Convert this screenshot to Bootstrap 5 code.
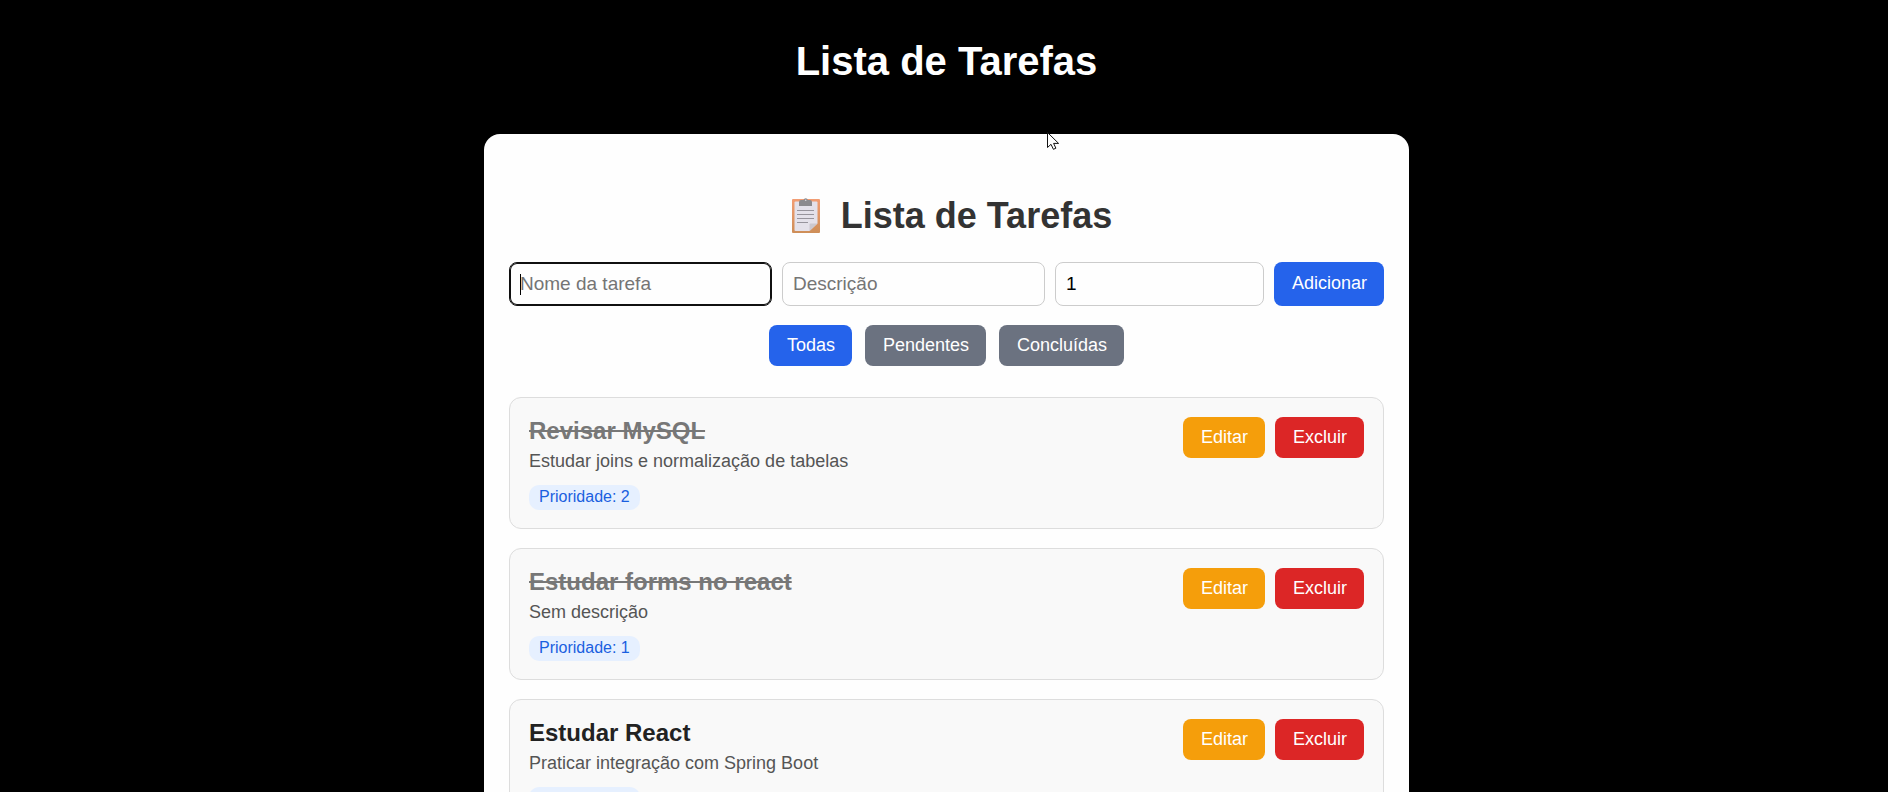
<!DOCTYPE html>
<html lang="pt-BR">
<head>
<meta charset="utf-8">
<meta name="viewport" content="width=device-width, initial-scale=1">
<title>Lista de Tarefas</title>
<link href="https://cdn.jsdelivr.net/npm/bootstrap@5.3.0/dist/css/bootstrap.min.css" rel="stylesheet">
<style>
  body { background: #000; font-family: "Liberation Sans", Arial, sans-serif; font-size: 18px; line-height: 20px; }
  .page { height: 100vh; overflow: hidden; padding: 37px 0 0 5px; }
  .page-title { font-size: 40px; line-height: 48px; margin-bottom: 49px; }
  .panel { max-width: 925px; padding: 60px 25px 25px; border-radius: 16px; background: #fefefe; }
  .panel-title { font-size: 36px; line-height: 44px; color: #333; gap: 12px; margin-bottom: 24px; }
  .task-form { gap: 10px; margin-bottom: 19px; }
  .field { flex: 1 1 0; min-width: 0; }
  .field-priority { flex: 0 1 209px; }
  .form-control { height: 44px; padding: 0 10px; font-size: 19px; border: 1px solid #ccc; border-radius: 8px; color: #000; background: #fefefe; }
  .form-control::placeholder { color: #757575; }
  .field-active .form-control { border-color: #101010; box-shadow: inset 0 0 0 1px #101010; }
  .caret { left: 11px; top: 12px; width: 1px; height: 21px; background: #000; }
  .btn { --bs-btn-color: #fff; --bs-btn-font-weight: 500; padding: 0 17px 2px 18px; height: 41px; border: 0; border-radius: 8px; font-size: 18px; line-height: 20px; white-space: nowrap; }
  .btn-add { height: 44px; }
  .btn-blue { --bs-btn-bg: #2563eb; }
  .btn-gray { --bs-btn-bg: #6b7280; }
  .btn-amber { --bs-btn-bg: #f59e0b; }
  .btn-red { --bs-btn-bg: #dc2626; }
  .filters { gap: 13px; margin-bottom: 31px; }
  .task-list { gap: 19px; }
  .task { padding: 19px 19px 18px; border: 1px solid #ddd; border-radius: 12px; background: #f9f9f9; }
  .task-name { font-size: 24px; line-height: 28px; color: #222; margin-bottom: 6px; }
  .task-done .task-name { color: #777; text-decoration: line-through; }
  .task-text { color: #555; margin-bottom: 14px; }
  .priority { display: block; width: max-content; padding: 0 10px 2px; font-size: 16px; line-height: 23px; border-radius: 10px; color: #1a5fe0; background: #e6f0ff; }
  .task-actions { gap: 10px; }
  .pointer { right: 349px; top: -2px; }
</style>
</head>
<body>
<div class="page">
  <h1 class="page-title text-center text-white fw-bold">Lista de Tarefas</h1>
  <main class="panel position-relative mx-auto">
    <svg class="pointer position-absolute" width="13" height="19" viewBox="0 0 13 19" aria-hidden="true"><path d="M.5.5v15l3.5-3.2 2.4 5 2.5-1.1-2.3-4.8h5Z" fill="#fff" stroke="#111"/></svg>
    <h2 class="panel-title d-flex justify-content-center align-items-center fw-bold">
      <svg width="48" height="36" viewBox="0 1 48 36" aria-hidden="true">
        <defs><linearGradient id="board" x2="0" y2="1"><stop stop-color="#f29d74"/><stop offset="1" stop-color="#ce8e58"/></linearGradient></defs>
        <rect x="11" y="2" width="28" height="34" rx="1" fill="url(#board)"/>
        <path d="M14.500 4.500h21a1 1 0 0 1 1 1v21l-8 7.500h-14a1 1 0 0 1-1-1V5.500a1 1 0 0 1 1-1Z" fill="#e4e1ea"/>
        <path d="M36.500 26.500l-8 7.500v-6.500a1 1 0 0 1 1-1Z" fill="#cbc8cf"/>
        <path d="M18 9V5q0-2 2-2h2.500a2.300 2.300 0 0 1 4.400 0H29q2 0 2 2v4Z" fill="#8b8a8e"/>
        <circle cx="24.700" cy="3.200" r=".8" fill="#d9d7dc"/>
        <path d="M16 13.500h17M16 17.500h17M16 21.500h17M16 25.500h11" stroke="#97949d"/>
      </svg>
      <span>Lista de Tarefas</span>
    </h2>
    <form class="task-form d-flex">
      <div class="field field-active position-relative">
        <input class="form-control" type="text" placeholder="Nome da tarefa" aria-label="Nome da tarefa">
        <span class="caret position-absolute"></span>
      </div>
      <div class="field"><input class="form-control" type="text" placeholder="Descrição" aria-label="Descrição"></div>
      <div class="field-priority"><input class="form-control" type="text" inputmode="numeric" value="1" aria-label="Prioridade"></div>
      <button class="btn btn-blue btn-add" type="button">Adicionar</button>
    </form>
    <div class="filters d-flex justify-content-center">
      <button class="btn btn-blue" type="button">Todas</button>
      <button class="btn btn-gray" type="button">Pendentes</button>
      <button class="btn btn-gray" type="button">Concluídas</button>
    </div>
    <ul class="task-list list-unstyled d-flex flex-column mb-0">
      <li class="task task-done d-flex justify-content-between align-items-start">
        <div>
          <h3 class="task-name fw-bold">Revisar MySQL</h3>
          <p class="task-text">Estudar joins e normalização de tabelas</p>
          <span class="priority">Prioridade: 2</span>
        </div>
        <div class="task-actions d-flex">
          <button class="btn btn-amber" type="button">Editar</button>
          <button class="btn btn-red" type="button">Excluir</button>
        </div>
      </li>
      <li class="task task-done d-flex justify-content-between align-items-start">
        <div>
          <h3 class="task-name fw-bold">Estudar forms no react</h3>
          <p class="task-text">Sem descrição</p>
          <span class="priority">Prioridade: 1</span>
        </div>
        <div class="task-actions d-flex">
          <button class="btn btn-amber" type="button">Editar</button>
          <button class="btn btn-red" type="button">Excluir</button>
        </div>
      </li>
      <li class="task d-flex justify-content-between align-items-start">
        <div>
          <h3 class="task-name fw-bold">Estudar React</h3>
          <p class="task-text">Praticar integração com Spring Boot</p>
          <span class="priority">Prioridade: 1</span>
        </div>
        <div class="task-actions d-flex">
          <button class="btn btn-amber" type="button">Editar</button>
          <button class="btn btn-red" type="button">Excluir</button>
        </div>
      </li>
    </ul>
  </main>
</div>
<script src="https://cdn.jsdelivr.net/npm/bootstrap@5.3.0/dist/js/bootstrap.bundle.min.js"></script>
</body>
</html>
